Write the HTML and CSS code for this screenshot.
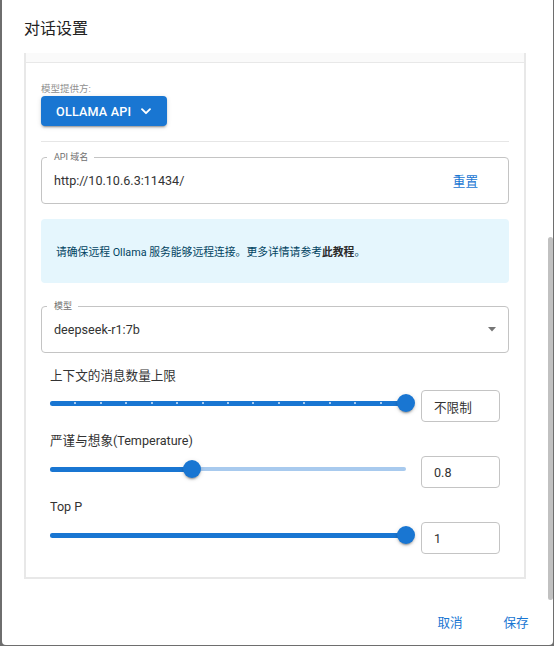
FILE: index.html
```html
<!DOCTYPE html>
<html lang="zh-CN">
<head>
<meta charset="utf-8">
<title>对话设置</title>
<link rel="stylesheet" href="styles.css">
</head>
<body>
<div class="dialog">
  <h2 class="dialog-title">对话设置</h2>
  <div class="dialog-content">
    <div class="panel">
      <div class="panel-head"></div>
      <div class="panel-body">
        <div class="provider-label">模型提供方:</div>
        <button class="provider-btn" type="button">
          <span>OLLAMA API</span>
          <svg class="chevron" width="14" height="14" viewBox="0 0 14 14"><path d="M3 5.2 L7 9.2 L11 5.2" fill="none" stroke="#fff" stroke-width="1.9" stroke-linecap="round" stroke-linejoin="round"/></svg>
        </button>
        <div class="divider"></div>
        <div class="field">
          <span class="legend">API 域名</span>
          <span class="field-value">http://10.10.6.3:11434/</span>
          <span class="reset">重置</span>
        </div>
        <div class="info">
          <p class="info-text">请确保远程 Ollama 服务能够远程连接。更多详情请参考<b class="info-link">此教程</b>。</p>
        </div>
        <div class="field select">
          <span class="legend">模型</span>
          <span class="field-value">deepseek-r1:7b</span>
          <svg class="drop" width="8" height="5" viewBox="0 0 8 5"><polygon points="0,0 8,0 4,4.5" fill="#757575"/></svg>
        </div>

        <div class="slider-label first">上下文的消息数量上限</div>
        <div class="slider-row">
          <div class="slider">
            <div class="rail">
              <div class="fill" style="width:100%"></div>
              <span class="mark" style="left:7.143%"></span>
              <span class="mark" style="left:14.286%"></span>
              <span class="mark" style="left:21.429%"></span>
              <span class="mark" style="left:28.571%"></span>
              <span class="mark" style="left:35.714%"></span>
              <span class="mark" style="left:42.857%"></span>
              <span class="mark" style="left:50%"></span>
              <span class="mark" style="left:57.143%"></span>
              <span class="mark" style="left:64.286%"></span>
              <span class="mark" style="left:71.429%"></span>
              <span class="mark" style="left:78.571%"></span>
              <span class="mark" style="left:85.714%"></span>
              <span class="mark" style="left:92.857%"></span>
              <span class="thumb" style="left:100%"></span>
            </div>
          </div>
          <div class="value-box">不限制</div>
        </div>

        <div class="slider-label">严谨与想象(Temperature)</div>
        <div class="slider-row">
          <div class="slider">
            <div class="rail">
              <div class="fill" style="width:40%"></div>
              <span class="thumb" style="left:40%"></span>
            </div>
          </div>
          <div class="value-box">0.8</div>
        </div>

        <div class="slider-label">Top P</div>
        <div class="slider-row">
          <div class="slider">
            <div class="rail">
              <div class="fill" style="width:100%"></div>
              <span class="thumb" style="left:100%"></span>
            </div>
          </div>
          <div class="value-box">1</div>
        </div>
      </div>
    </div>
  </div>
  <div class="dialog-actions">
    <button class="text-btn" type="button">取消</button>
    <button class="text-btn" type="button">保存</button>
  </div>
  <div class="scroll-thumb"></div>
</div>
</body>
</html>
```

FILE: styles.css
```css
html, body {
  margin: 0;
  padding: 0;
}
body {
  background: #6e6e6e;
  height: 646px;
  overflow: hidden;
  font-family: Roboto, "Noto Sans CJK SC", sans-serif;
  color: rgba(0, 0, 0, 0.87);
}
.dialog {
  position: relative;
  margin-left: 2px;
  width: 551px;
  height: 645px;
  background: #fff;
  border-radius: 0 0 4px 4px;
  display: flex;
  flex-direction: column;
  overflow: hidden;
}
.dialog-title {
  margin: 0;
  height: 53px;
  box-sizing: border-box;
  padding: 0 22px;
  display: flex;
  align-items: center;
  font-size: 16px;
  font-weight: 400;
  color: #222;
}
.dialog-content {
  flex: 1;
  overflow: hidden;
  padding: 0 27px 0 22px;
}
.panel {
  border: 2px solid #e8e8e8;
  border-top: none;
}
.panel-head {
  height: 9px;
  background: #fafafa;
  border-bottom: 1px solid #e8e8e8;
}
.panel-body {
  padding: 19px 15px 23px;
}
.provider-label {
  font-size: 9.5px;
  line-height: 13px;
  color: #8f8f8f;
}
.provider-btn {
  margin-top: 1px;
  height: 30px;
  display: inline-flex;
  align-items: center;
  gap: 8px;
  padding: 0 14px 0 15px;
  border: none;
  border-radius: 4px;
  background: #1976d2;
  color: #fff;
  font-family: Roboto, "Noto Sans CJK SC", sans-serif;
  font-size: 12.6px;
  font-weight: 500;
  letter-spacing: 0.2px;
  box-shadow: 0 3px 1px -2px rgba(0,0,0,.2), 0 2px 2px 0 rgba(0,0,0,.14), 0 1px 5px 0 rgba(0,0,0,.12);
  vertical-align: top;
}
.chevron {
  display: block;
}
.divider {
  margin-top: 15px;
  height: 1px;
  background: #e6e6e6;
}
.field {
  position: relative;
  margin-top: 15px;
  height: 47px;
  box-sizing: border-box;
  border: 1px solid #c4c4c4;
  border-radius: 4px;
  display: flex;
  align-items: center;
  justify-content: space-between;
  padding: 0 30px 0 12px;
}
.legend {
  position: absolute;
  left: 5px;
  top: -7px;
  padding: 0 6px 0 7px;
  background: #fff;
  font-size: 9px;
  line-height: 12px;
  color: #707070;
}
.field-value {
  font-size: 12.6px;
  color: #333;
}
.reset {
  font-size: 12.6px;
  color: #1976d2;
}
.info {
  margin-top: 15px;
  height: 64px;
  box-sizing: border-box;
  background: #e5f6fd;
  border-radius: 4px;
  padding: 0 15px;
  display: flex;
  align-items: center;
}
.info-text {
  margin: 0;
  font-size: 10.8px;
  color: #014361;
}
.info-link {
  font-weight: 600;
  color: #2a2a2a;
}
.select {
  margin-top: 23px;
  padding-right: 12px;
}
.drop {
  display: block;
}
.slider-label {
  margin-top: 10px;
  padding-left: 9px;
  font-size: 12.6px;
  line-height: 18px;
  color: #333;
}
.slider-label.first {
  margin-top: 14px;
}
.slider-row {
  display: flex;
  align-items: center;
  margin-top: 5px;
  padding-right: 9px;
}
.slider-label:not(.first) + .slider-row {
  margin-top: 6px;
}
.slider {
  flex: 1;
  padding: 0 9px;
  margin-bottom: 6px;
}
.rail {
  position: relative;
  height: 4px;
  border-radius: 2px;
  background: #a8caee;
}
.fill {
  position: absolute;
  left: 0;
  top: 50%;
  height: 5px;
  margin-top: -2.5px;
  border-radius: 3px;
  background: #1976d2;
}
.mark {
  position: absolute;
  top: 1px;
  width: 2px;
  height: 2px;
  margin-left: -1px;
  border-radius: 1px;
  background: rgba(255, 255, 255, 0.85);
}
.thumb {
  position: absolute;
  top: 50%;
  width: 18px;
  height: 18px;
  margin: -9px 0 0 -9px;
  border-radius: 50%;
  background: #1976d2;
  box-shadow: 0 3px 1px -2px rgba(0,0,0,.2), 0 2px 2px 0 rgba(0,0,0,.14), 0 1px 5px 0 rgba(0,0,0,.12);
}
.value-box {
  width: 79px;
  height: 32px;
  box-sizing: border-box;
  margin-left: 6px;
  border: 1px solid #c4c4c4;
  border-radius: 4px;
  padding-left: 12px;
  display: flex;
  align-items: center;
  font-size: 12.6px;
  color: #333;
}
.dialog-actions {
  height: 48px;
  box-sizing: border-box;
  padding: 6px 5px;
  display: flex;
  justify-content: flex-end;
  gap: 2px;
}
.text-btn {
  min-width: 64px;
  height: 36px;
  padding: 0 8px;
  border: none;
  background: transparent;
  color: #1976d2;
  font-family: Roboto, "Noto Sans CJK SC", sans-serif;
  font-size: 12.6px;
}
.scroll-thumb {
  position: absolute;
  right: 0;
  top: 237px;
  width: 5px;
  height: 363px;
  border-radius: 3px;
  background: #c1c1c1;
}
```
